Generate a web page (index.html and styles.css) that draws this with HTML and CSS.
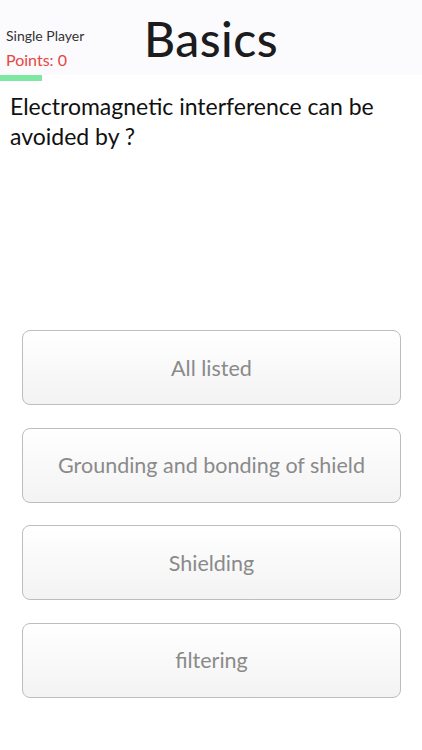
FILE: index.html
```html
<!DOCTYPE html>
<html>
<head>
<meta charset="utf-8">
<link rel="stylesheet" href="styles.css">
</head>
<body>
<div class="screen">
  <header class="header">
    <div class="meta">
      <div class="mode">Single Player</div>
      <div class="points">Points: 0</div>
    </div>
    <h1 class="title">Basics</h1>
  </header>
  <div class="progress"><div class="progress-fill" style="width:42px"></div></div>
  <p class="question">Electromagnetic interference can be avoided by ?</p>
  <div class="answers">
    <button class="answer">All listed</button>
    <button class="answer">Grounding and bonding of shield</button>
    <button class="answer">Shielding</button>
    <button class="answer">filtering</button>
  </div>
</div>
</body>
</html>
```
FILE: styles.css
```css
html, body {
  margin: 0;
  padding: 0;
  background: #ffffff;
}
.screen {
  width: 422px;
  height: 750px;
  font-family: "Lato", "Open Sans", sans-serif;
  display: flex;
  flex-direction: column;
}
.header {
  position: relative;
  height: 75px;
  background: #fbfafd;
}
.meta {
  position: absolute;
  left: 6px;
  top: 27px;
}
.mode {
  font-size: 14px;
  color: #333;
  line-height: 18px;
}
.points {
  font-size: 16px;
  color: #e8463f;
  line-height: 20px;
  margin-top: 5px;
}
.title {
  margin: 0;
  text-align: center;
  font-size: 48px;
  font-weight: 500;
  color: #1c1c1e;
  line-height: 78px;
  letter-spacing: 0.5px;
}
.progress {
  height: 6px;
}
.progress-fill {
  height: 6px;
  background: #7ee8a3;
}
.question {
  margin: 10px 0 0 10px;
  font-size: 23px;
  line-height: 30px;
  color: #111;
  padding-right: 20px;
}
.answers {
  margin-top: 179px;
  display: flex;
  flex-direction: column;
  gap: 22.5px;
  padding: 0 21px 0 22px;
}
.answer {
  height: 75px;
  border: 1px solid #bdbdbd;
  border-radius: 8px;
  background: linear-gradient(#ffffff, #f3f3f3);
  font-family: "Lato", "Open Sans", sans-serif;
  font-size: 21.5px;
  color: #8a8a8a;
  padding: 0;
}
```
